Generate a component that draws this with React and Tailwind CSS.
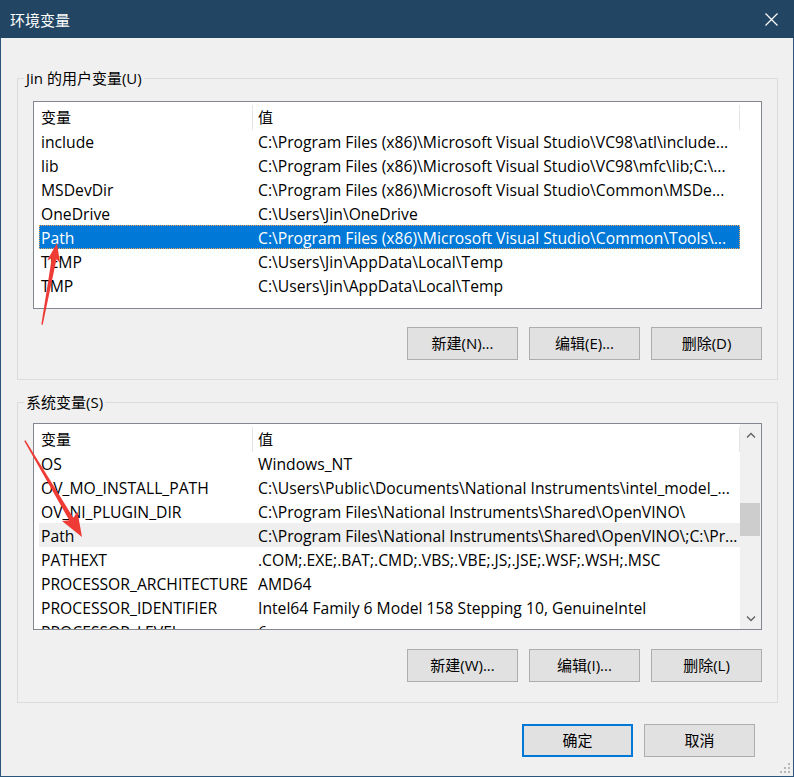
import React from 'react';

const userVars = [
    ['include', 'C:\\Program Files (x86)\\Microsoft Visual Studio\\VC98\\atl\\include...'],
    ['lib', 'C:\\Program Files (x86)\\Microsoft Visual Studio\\VC98\\mfc\\lib;C:\\...'],
    ['MSDevDir', 'C:\\Program Files (x86)\\Microsoft Visual Studio\\Common\\MSDe...'],
    ['OneDrive', 'C:\\Users\\Jin\\OneDrive'],
    ['Path', 'C:\\Program Files (x86)\\Microsoft Visual Studio\\Common\\Tools\\...', 'selected'],
    ['TEMP', 'C:\\Users\\Jin\\AppData\\Local\\Temp'],
    ['TMP', 'C:\\Users\\Jin\\AppData\\Local\\Temp'],
];

const sysVars = [
    ['OS', 'Windows_NT'],
    ['OV_MO_INSTALL_PATH', 'C:\\Users\\Public\\Documents\\National Instruments\\intel_model_...'],
    ['OV_NI_PLUGIN_DIR', 'C:\\Program Files\\National Instruments\\Shared\\OpenVINO\\'],
    ['Path', 'C:\\Program Files\\National Instruments\\Shared\\OpenVINO\\;C:\\Pr...', 'hover'],
    ['PATHEXT', '.COM;.EXE;.BAT;.CMD;.VBS;.VBE;.JS;.JSE;.WSF;.WSH;.MSC'],
    ['PROCESSOR_ARCHITECTURE', 'AMD64'],
    ['PROCESSOR_IDENTIFIER', 'Intel64 Family 6 Model 158 Stepping 10, GenuineIntel'],
    ['PROCESSOR_LEVEL', '6'],
];

function Row({ name, value, state }) {
    let look = 'text-black';
    if (state === 'selected') look = 'bg-[#0078d7] text-white outline outline-1 outline-dotted outline-[#f3a65a] -outline-offset-1';
    if (state === 'hover') look = 'bg-[#efefef] text-black';
    return (
        <div className={`flex h-[24px] w-[701px] ml-[5px] shrink-0 items-center pt-[1px] leading-[22px] whitespace-nowrap ${look}`}>
            <div className="w-[219px] pl-[2px] overflow-hidden">{name}</div>
            <div className="flex-1 overflow-hidden">{value}</div>
        </div>
    );
}

function ListHeader() {
    return (
        <div className="flex h-[27px] shrink-0 items-center pt-[3px] text-[15px]">
            <div className="w-[218px] pl-[7px]">变量</div>
            <div className="w-px h-[25px] bg-[#e5e5e5]" />
            <div className="w-[486px] pl-[5px]">值</div>
            <div className="w-px h-[25px] bg-[#e5e5e5]" />
        </div>
    );
}

function Chevron({ up }) {
    return (
        <svg width="10" height="6" viewBox="0 0 10 6">
            <polyline points={up ? '1,5.5 5,1.5 9,5.5' : '1,0.5 5,4.5 9,0.5'} fill="none" stroke="#606060" strokeWidth="1.3" />
        </svg>
    );
}

function Scrollbar() {
    return (
        <div className="w-[21px] h-full flex flex-col bg-[#f0f0f0]">
            <div className="h-[21px] flex items-center justify-center"><Chevron up /></div>
            <div className="flex-1">
                <div className="mt-[58px] h-[33px] w-[20px] bg-[#cdcdcd]" />
            </div>
            <div className="h-[21px] flex items-center justify-center"><Chevron /></div>
        </div>
    );
}

function WinButton({ children, primary }) {
    return (
        <button className={`w-[111px] h-[33px] bg-[#e1e1e1] text-black flex items-center justify-center ${primary ? 'border-2 border-[#0078d7]' : 'border border-[#adadad]'}`}>
            {children}
        </button>
    );
}

function VarList({ rows, height, scroll }) {
    return (
        <div className={`flex border border-[#828790] bg-white overflow-hidden text-[15.7px] ${height}`}>
            <div className="w-[706px] flex flex-col overflow-hidden">
                <ListHeader />
                {rows.map(([n, v, s]) => <Row key={n} name={n} value={v} state={s} />)}
            </div>
            {scroll && <Scrollbar />}
        </div>
    );
}

function Arrow({ x, y, angle, len, head, hw }) {
    return (
        <polygon
            transform={`translate(${x} ${y}) rotate(${angle})`}
            points={`0,0 ${hw},${head} 2.4,${head - 3} 0.7,${len} -0.7,${len} -2.4,${head - 3} -${hw},${head}`}
            fill="#ee3b36"
        />
    );
}

export default function App() {
    return (
        <div className="relative w-[794px] h-[777px] flex flex-col overflow-hidden text-[15px] font-['Open_Sans','Noto_Sans_CJK_SC',sans-serif]">
            {/* title bar */}
            <div className="h-[38px] shrink-0 bg-[#214562] flex items-center justify-between pl-[10px] pr-[16px] text-white">
                <span className="pt-[2px]">环境变量</span>
                <svg width="13" height="13" viewBox="0 0 13 13">
                    <path d="M0.5 0.5 L12.5 12.5 M12.5 0.5 L0.5 12.5" stroke="#ffffff" strokeWidth="1.2" />
                </svg>
            </div>

            <div className="relative flex-1 flex flex-col bg-[#f0f0f0] border-x border-b border-[#2b557a]">
                <fieldset className="ml-[16px] mt-[30px] w-[761px] border border-[#dcdcdc] px-[15px] pt-[13px] pb-[19px]">
                    <legend className="ml-[-9px] px-[2px] leading-[20px]">Jin 的用户变量(U)</legend>
                    <VarList rows={userVars} height="h-[208px]" />
                    <div className="mt-[18px] flex justify-end gap-[11px]">
                        <WinButton>新建(N)...</WinButton>
                        <WinButton>编辑(E)...</WinButton>
                        <WinButton>删除(D)</WinButton>
                    </div>
                </fieldset>

                <fieldset className="ml-[16px] mt-[12px] w-[761px] border border-[#dcdcdc] px-[15px] pt-[11px] pb-[20px]">
                    <legend className="ml-[-9px] px-[2px] leading-[20px]">系统变量(S)</legend>
                    <VarList rows={sysVars} height="h-[207px]" scroll />
                    <div className="mt-[19px] flex justify-end gap-[11px]">
                        <WinButton>新建(W)...</WinButton>
                        <WinButton>编辑(I)...</WinButton>
                        <WinButton>删除(L)</WinButton>
                    </div>
                </fieldset>

                <div className="mt-[21px] pl-[521px] flex gap-[11px]">
                    <WinButton primary>确定</WinButton>
                    <WinButton>取消</WinButton>
                </div>

                {/* resize grip */}
                <svg className="absolute right-[2px] bottom-[2px]" width="12" height="12" viewBox="0 0 12 12">
                    <rect x="9" y="1" width="2" height="2" fill="#b8b8b8" />
                    <rect x="5" y="5" width="2" height="2" fill="#b8b8b8" />
                    <rect x="9" y="5" width="2" height="2" fill="#b8b8b8" />
                    <rect x="1" y="9" width="2" height="2" fill="#b8b8b8" />
                    <rect x="5" y="9" width="2" height="2" fill="#b8b8b8" />
                    <rect x="9" y="9" width="2" height="2" fill="#b8b8b8" />
                </svg>
            </div>

            {/* annotation arrows */}
            <svg className="absolute left-0 top-0 pointer-events-none" width="794" height="777">
                <Arrow x={57} y={243} angle={10.4} len={83} head={19} hw={6.5} />
                <Arrow x={82} y={537} angle={149.3} len={112} head={24} hw={9} />
            </svg>
        </div>
    );
}
